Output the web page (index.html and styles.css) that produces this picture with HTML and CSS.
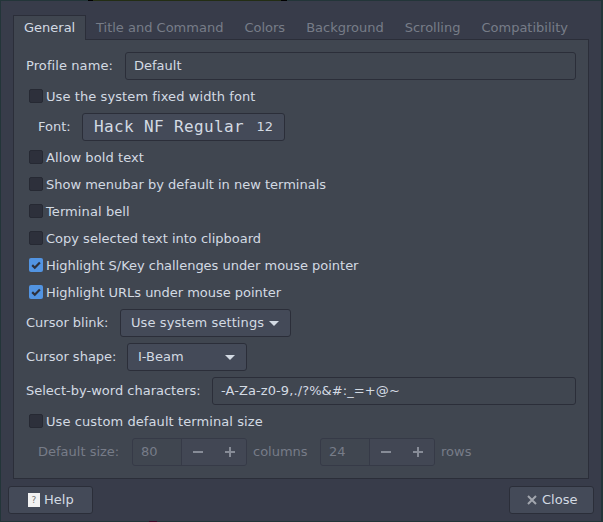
FILE: index.html
```html
<!DOCTYPE html>
<html lang="en">
<head>
<meta charset="utf-8">
<title>Editing Profile</title>
<link rel="stylesheet" href="styles.css">
</head>
<body>
<main class="window">
  <section class="notebook">
    <nav class="tabs">
      <div class="tab active">General</div>
      <div class="tab">Title and Command</div>
      <div class="tab">Colors</div>
      <div class="tab">Background</div>
      <div class="tab">Scrolling</div>
      <div class="tab">Compatibility</div>
    </nav>
    <div class="page">
      <div class="row"><span class="label w-profile loose">Profile name:</span><div class="entry">Default</div></div>
      <div class="check loose"><i class="box"></i>Use the system fixed width font</div>
      <div class="row indent"><span class="label w-font">Font:</span><div class="button font-button"><span class="font-name">Hack NF Regular</span><span>12</span></div></div>
      <div class="check loose"><i class="box"></i>Allow bold text</div>
      <div class="check"><i class="box"></i>Show menubar by default in new terminals</div>
      <div class="check loose"><i class="box"></i>Terminal bell</div>
      <div class="check"><i class="box"></i>Copy selected text into clipboard</div>
      <div class="check tight"><i class="box on"><svg viewBox="0 0 14 14" width="14" height="14"><path d="M3.2 7.1 5.8 9.7 10.9 4.4"/></svg></i>Highlight S/Key challenges under mouse pointer</div>
      <div class="check tight"><i class="box on"><svg viewBox="0 0 14 14" width="14" height="14"><path d="M3.2 7.1 5.8 9.7 10.9 4.4"/></svg></i>Highlight URLs under mouse pointer</div>
      <div class="row"><span class="label w-blink">Cursor blink:</span><div class="button combo combo-blink"><span class="loose">Use system settings</span><svg class="arrow" viewBox="0 0 10 5" width="10" height="5"><path d="M0 0h10L5 5z"/></svg></div></div>
      <div class="row"><span class="label w-shape">Cursor shape:</span><div class="button combo combo-shape"><span>I-Beam</span><svg class="arrow" viewBox="0 0 10 5" width="10" height="5"><path d="M0 0h10L5 5z"/></svg></div></div>
      <div class="row"><span class="label w-select">Select-by-word characters:</span><div class="entry loose">-A-Za-z0-9,./?%&amp;#:_=+@~</div></div>
      <div class="check loose"><i class="box"></i>Use custom default terminal size</div>
      <div class="row indent disabled">
        <span class="label w-size">Default size:</span>
        <div class="spin"><span class="value">80</span><span class="steps"><svg viewBox="0 0 10 10" width="10" height="10"><path d="M0 4h10v2H0z"/></svg><svg viewBox="0 0 10 10" width="10" height="10"><path d="M0 4h4V0h2v4h4v2H6v4H4V6H0z"/></svg></span></div>
        <span class="label unit">columns</span>
        <div class="spin"><span class="value">24</span><span class="steps"><svg viewBox="0 0 10 10" width="10" height="10"><path d="M0 4h10v2H0z"/></svg><svg viewBox="0 0 10 10" width="10" height="10"><path d="M0 4h4V0h2v4h4v2H6v4H4V6H0z"/></svg></span></div>
        <span class="label unit">rows</span>
      </div>
    </div>
  </section>
  <footer class="actions">
    <div class="button action"><span class="help-icon">?</span>Help</div>
    <div class="button action close"><svg class="close-icon" viewBox="0 0 10 10" width="10" height="10"><path d="M1 1 9 9M9 1 1 9"/></svg>Close</div>
  </footer>
</main>
</body>
</html>
```
FILE: styles.css
```css
* { box-sizing: border-box; }
body {
  margin: 0;
  width: 603px;
  height: 522px;
  padding: 1px 2px 1px 1px;
  /* desktop visible along the window's edges */
  background:
    linear-gradient(90deg, transparent 88px, #000 88px 93px, #232d14 93px 281px, #000 281px 287px, transparent 287px) 0 0 / 603px 1px no-repeat,
    linear-gradient(90deg, transparent 149px, #3a0a26 149px 157px, transparent 157px) 0 521px / 603px 1px no-repeat,
    #233539;
  color: #d3dae3;
  font: 13px/20px "DejaVu Sans", sans-serif;
  white-space: nowrap;
  overflow: hidden;
}
.window {
  height: 520px;
  background: #383c4a;
  padding: 14px 7px 7px;
  display: flex;
  flex-direction: column;
}
.loose { letter-spacing: 0.09px; }
.tight { letter-spacing: -0.025px; }
.notebook { width: 576px; height: 464px; margin-left: 5px; display: flex; flex-direction: column; }
.tabs { display: flex; height: 25px; margin-bottom: -1px; }
.tab { padding: 3px 11px 0 10px; color: #777c88; }
.tab.active {
  width: 73px;
  color: #d3dae3;
  background: #404650;
  border: 1px solid #2b2e39;
  border-bottom: 0;
  padding-top: 2px;
  z-index: 1;
}
.page {
  flex: 1;
  border: 1px solid #2b2e39;
  background: #404650;
  padding: 12px;
  display: flex;
  flex-direction: column;
  gap: 6px;
}
.row { display: flex; height: 28px; align-items: center; }
.indent { padding-left: 12px; }
.label { flex: none; }
.w-profile { width: 99px; }
.w-font { width: 44px; }
.w-blink { width: 94px; }
.w-shape { width: 101px; }
.w-select { width: 186px; }
.w-size { width: 94px; }
.entry {
  flex: 1;
  height: 28px;
  border: 1px solid #2b2e39;
  border-radius: 3px;
  padding: 3px 8px;
}
.check { display: flex; align-items: flex-start; height: 21px; padding-left: 3px; gap: 3px; line-height: 22px; }
.box {
  flex: none;
  width: 14px;
  height: 14px;
  margin-top: 3px;
  border: 1px solid #262933;
  border-radius: 2px;
  background: #2d303b;
}
.box.on { border: 0; background: #5294e2; }
.box svg { display: block; fill: none; stroke: #2d303b; stroke-width: 2.2; }
.button {
  height: 28px;
  border: 1px solid #2b2e39;
  border-radius: 3px;
  background: #444a58;
  display: flex;
  align-items: center;
}
.font-button { width: 203px; padding: 0 11px; justify-content: space-between; }
.font-name { font: 16px/20px "DejaVu Sans Mono", monospace; letter-spacing: 0.37px; }
.combo { padding: 0 11px 0 10px; justify-content: space-between; }
.combo-blink { width: 171px; }
.combo-shape { width: 120px; }
.arrow { fill: #d3dae3; margin-top: 1px; }
.disabled { color: #777c88; }
.spin {
  width: 115px;
  height: 28px;
  border: 1px solid #363a47;
  border-radius: 3px;
  display: flex;
  overflow: hidden;
}
.value { width: 48px; padding: 3px 8px; }
.steps {
  flex: 1;
  border-left: 1px solid #363a47;
  background: #424754;
  display: flex;
  align-items: center;
  justify-content: center;
  gap: 22px;
  fill: #878c97;
}
.unit { width: 67px; margin-left: 6px; }
.actions { display: flex; justify-content: space-between; margin-top: 7px; }
.action { width: 85px; padding-left: 19px; gap: 4px; }
.close { padding-left: 17px; gap: 5px; }
.help-icon {
  width: 12px;
  height: 14px;
  background: #f2f2f2;
  color: #777;
  font: 9px/14px "DejaVu Sans", sans-serif;
  text-align: center;
}
.close-icon { fill: none; stroke: #a2a6ae; stroke-width: 2; }
```
